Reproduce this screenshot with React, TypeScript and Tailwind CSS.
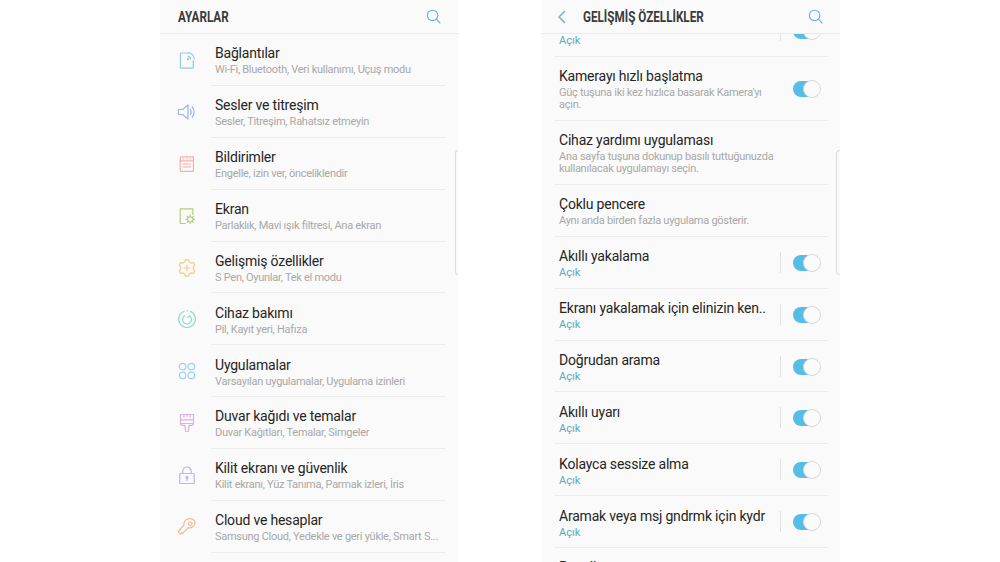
import React from "react";

const sw = { fill: "none", strokeWidth: 1.2, strokeLinecap: "round" as const, strokeLinejoin: "round" as const };

function Ic({ color, children }: { color: string; children: React.ReactNode }) {
  return (
    <svg width="20" height="20" viewBox="0 0 20 20" stroke={color} {...sw}>
      {children}
    </svg>
  );
}

function cogPath() {
  const pt = (r: number, deg: number) => {
    const a = ((deg - 90) * Math.PI) / 180;
    return `${(10 + r * Math.cos(a)).toFixed(2)} ${(10 + r * Math.sin(a)).toFixed(2)}`;
  };
  let d = "";
  for (let k = 0; k < 6; k++) {
    const c = k * 60;
    d += `${k === 0 ? "M" : "L"}${pt(6.6, c - 17)} `;
    d += `C${pt(9.6, c - 20)} ${pt(9.6, c + 20)} ${pt(6.6, c + 17)} `;
    d += `Q${pt(5.9, c + 30)} ${pt(6.6, c + 43)} `;
  }
  return d + "Z";
}

const icons: Record<string, React.ReactNode> = {
  conn: (
    <Ic color="#93c8e8">
      <path d="M10.5 3H4.2a.8.8 0 0 0-.8.8v13.6c0 .4.3.7.8.7h11.4c.4 0 .7-.3.7-.7V10.5" />
      <path d="M11 6.4a3 3 0 0 1 2.6 2.8" />
      <path d="M11.2 2.6a6.4 6.4 0 0 1 6 6.4" />
      <circle cx="11" cy="9.2" r=".5" />
    </Ic>
  ),
  sound: (
    <Ic color="#9fb3ea">
      <path d="M1.5 7.5h4L11 3v14l-5.5-4.5h-4z" />
      <path d="M13.2 7.5a4 4 0 0 1 0 5" />
      <path d="M15.2 5a7.5 7.5 0 0 1 0 10" />
    </Ic>
  ),
  notif: (
    <Ic color="#f4b2aa">
      <rect x="3.2" y="2.8" width="13.2" height="14.6" rx=".6" />
      <path d="M3.2 6.8h13.2M6 10h7.6M6 13h7.6" />
      <path d="M6 4.8h.4M9.6 4.8h.4M13.2 4.8h.4" strokeWidth="1.2" />
    </Ic>
  ),
  screen: (
    <Ic color="#b3cf7c">
      <path d="M8.5 17.5H3.2V2.8h12.6v5.6" />
      <circle cx="13.2" cy="13.4" r="2.6" />
      <path d="M13.2 9.2v1M13.2 16.6v1M9 13.4h1M16.4 13.4h1M10.2 10.4l.7.7M15.5 15.7l.7.7M10.2 16.4l.7-.7M15.5 11.1l.7-.7" />
    </Ic>
  ),
  adv: (
    <Ic color="#f2cd85">
      <path d={cogPath()} />
      <path d="M10 7.2v5.6M7.2 10h5.6" />
    </Ic>
  ),
  care: (
    <Ic color="#9ad8cb">
      <path d="M13.4 2.4a8.4 8.4 0 1 1-6.2-.2" />
      <path d="M12.4 6.8a4.4 4.4 0 1 1-4.8 0" />
      <path d="M10 1.7h.3" strokeWidth="1.4" />
      <path d="M12.4 6.8 10.8 8.4" />
    </Ic>
  ),
  apps: (
    <Ic color="#a2d2ee">
      <circle cx="5.6" cy="5.6" r="3.3" />
      <circle cx="14.4" cy="5.6" r="3.3" />
      <circle cx="5.6" cy="14.4" r="3.3" />
      <circle cx="14.4" cy="14.4" r="3.3" />
    </Ic>
  ),
  theme: (
    <Ic color="#d9b2e3">
      <path d="M3.5 1.5h13v9h-13z" />
      <path d="M3.5 6.8h13M7 1.5v2.8M10 1.5v2M13 1.5v2.8" />
      <path d="M3.5 10.5c0 1.2 1 1.8 2 1.8h2c.4 0 .7.3.7.7v3.8a1.8 1.8 0 0 0 3.6 0V13c0-.4.3-.7.7-.7h2c1 0 2-.6 2-1.8" />
    </Ic>
  ),
  lock: (
    <Ic color="#c0b3ee">
      <rect x="2.8" y="8.5" width="14.4" height="10" rx=".6" />
      <path d="M5.8 8.5V6.2a4.2 4.2 0 0 1 8.4 0v2.3" />
      <circle cx="10" cy="12.4" r="1" />
      <path d="M10 13.4v2" />
    </Ic>
  ),
  key: (
    <Ic color="#f6b98d">
      <path d="M11.5 1.8c-2.8.4-5 3-4.6 6.3L1.6 14c-.3.3-.3.7 0 1l.9 1.2c.3.4.8 1 1.2.6l.8-.7.9.2c.4.1.7-.2.7-.5v-.8h.8c.4 0 .6-.3.7-.6l3.8-3.8c3.2 1 6.4-1.7 6.6-4.6.1-3.2-3.2-4.7-6.5-4.2z" />
      <circle cx="13.2" cy="6.8" r="1.8" />
    </Ic>
  ),
};

const left = [
  ["conn", "Bağlantılar", "Wi-Fi, Bluetooth, Veri kullanımı, Uçuş modu"],
  ["sound", "Sesler ve titreşim", "Sesler, Titreşim, Rahatsız etmeyin"],
  ["notif", "Bildirimler", "Engelle, izin ver, önceliklendir"],
  ["screen", "Ekran", "Parlaklık, Mavi ışık filtresi, Ana ekran"],
  ["adv", "Gelişmiş özellikler", "S Pen, Oyunlar, Tek el modu"],
  ["care", "Cihaz bakımı", "Pil, Kayıt yeri, Hafıza"],
  ["apps", "Uygulamalar", "Varsayılan uygulamalar, Uygulama izinleri"],
  ["theme", "Duvar kağıdı ve temalar", "Duvar Kağıtları, Temalar, Simgeler"],
  ["lock", "Kilit ekranı ve güvenlik", "Kilit ekranı, Yüz Tanıma, Parmak izleri, İris"],
  ["key", "Cloud ve hesaplar", "Samsung Cloud, Yedekle ve geri yükle, Smart S..."],
];

function Search() {
  return (
    <svg width="15" height="15" viewBox="0 0 15 15" fill="none" stroke="#6db3cc" strokeWidth="1.1" strokeLinecap="round">
      <circle cx="6.6" cy="6.4" r="5.2" />
      <path d="m10.4 10.2 3.6 3.8" />
    </svg>
  );
}

function Toggle() {
  return (
    <div className="relative h-4 w-[27px] shrink-0 rounded-full bg-[#56bde6]">
      <div className="absolute -right-px -top-px h-[18px] w-[18px] rounded-full border border-[#d8d8d8] bg-[#fbfbfb]" />
    </div>
  );
}

function Title({ children }: { children: React.ReactNode }) {
  return <div className="whitespace-nowrap text-[14px] leading-[18px] tracking-[-0.2px] text-[#252525]">{children}</div>;
}

function Sub({ children, className = "" }: { children: React.ReactNode; className?: string }) {
  return <div className={`mt-[2px] text-[11px] leading-[12.5px] tracking-[-0.27px] text-[#a8a8a8] ${className}`}>{children}</div>;
}

function ToggleRow({ title }: { title: string }) {
  return (
    <div className="flex h-[51.9px] shrink-0 items-center border-b border-[#ececec]">
      <div className="min-w-0 flex-1 pl-[5px] pt-[2px]">
        <Title>{title}</Title>
        <div className="mt-[1px] text-[11px] leading-[13px] text-[#56a9c9]">Açık</div>
      </div>
      <div className="mr-3 h-[21px] w-px bg-[#e2e2e2]" />
      <div className="mr-[8px] pt-[1px]">
        <Toggle />
      </div>
    </div>
  );
}

export default function App() {
  return (
    <div className="flex h-[562px] w-[1000px] justify-center gap-[84px] overflow-hidden bg-white font-['Roboto',sans-serif]">
      <div className="relative flex h-full w-[298px] flex-col bg-[#fafafa]">
        <header className="flex h-[34px] shrink-0 items-center justify-between border-b border-[#e9e9e9] pl-[18px] pr-[17px]">
          <span className="origin-left scale-x-[0.835] pt-[1px] text-[14px] font-bold text-[#3a3a3a]">AYARLAR</span>
          <Search />
        </header>
        <div className="flex flex-col">
          {left.map(([ic, t, s]) => (
            <div key={t} className="flex h-[51.9px] shrink-0 items-center">
              <div className="flex w-[51px] shrink-0 justify-center pl-[3px]">{icons[ic]}</div>
              <div className="mr-3 flex h-full min-w-0 flex-1 flex-col justify-center border-b border-[#ececec] pl-1 pt-[2px]">
                <Title>{t}</Title>
                <Sub className="whitespace-nowrap">{s}</Sub>
              </div>
            </div>
          ))}
        </div>
        <div className="absolute right-0 top-[150px] h-[125px] w-[3px] rounded-l-[4px] border-y border-l border-[#dcdcdc]" />
      </div>

      <div className="relative flex h-full w-[298px] flex-col bg-[#fafafa]">
        <header className="relative z-10 flex h-[34px] shrink-0 items-center border-b border-[#e9e9e9] bg-[#fafafa] pl-[15px] pr-[17px]">
          <svg width="10" height="14" viewBox="0 0 10 14" fill="none" stroke="#6db3cc" strokeWidth="1.5" strokeLinecap="round" strokeLinejoin="round">
            <path d="M7.5 1.5 2 7l5.5 5.5" />
          </svg>
          <span className="ml-[16px] flex-1 origin-left scale-x-[0.835] whitespace-nowrap pt-[1px] text-[14px] font-bold text-[#3a3a3a]">GELİŞMİŞ ÖZELLİKLER</span>
          <Search />
        </header>
        <div className="flex min-h-0 flex-1 flex-col overflow-hidden px-3">
          <div className="-mt-[29px]">
            <ToggleRow title="Akıllı bekleme" />
          </div>
          <div className="flex h-[64px] shrink-0 items-center border-b border-[#ececec]">
            <div className="min-w-0 flex-1 pl-[5px] pt-[2px]">
              <Title>Kamerayı hızlı başlatma</Title>
              <Sub className="w-[215px]">Güç tuşuna iki kez hızlıca basarak Kamera'yı açın.</Sub>
            </div>
            <div className="mr-[8px] pt-[1px]">
              <Toggle />
            </div>
          </div>
          <div className="flex h-[64px] shrink-0 flex-col justify-center border-b border-[#ececec] pl-[5px] pt-[2px]">
            <Title>Cihaz yardımı uygulaması</Title>
            <Sub className="w-[240px]">Ana sayfa tuşuna dokunup basılı tuttuğunuzda kullanılacak uygulamayı seçin.</Sub>
          </div>
          <div className="flex h-[51.9px] shrink-0 flex-col justify-center border-b border-[#ececec] pl-[5px] pt-[2px]">
            <Title>Çoklu pencere</Title>
            <Sub>Aynı anda birden fazla uygulama gösterir.</Sub>
          </div>
          <ToggleRow title="Akıllı yakalama" />
          <ToggleRow title="Ekranı yakalamak için elinizin ken.." />
          <ToggleRow title="Doğrudan arama" />
          <ToggleRow title="Akıllı uyarı" />
          <ToggleRow title="Kolayca sessize alma" />
          <ToggleRow title="Aramak veya msj gndrmk için kydr" />
          <div className="shrink-0 pl-[5px] pt-[10px] text-[14px] leading-[18px] tracking-[-0.2px] text-[#252525]">Paneller</div>
        </div>
        <div className="absolute right-0 top-[150px] h-[125px] w-[4px] rounded-l-[4px] border-y border-l border-[#dcdcdc]" />
      </div>
    </div>
  );
}
